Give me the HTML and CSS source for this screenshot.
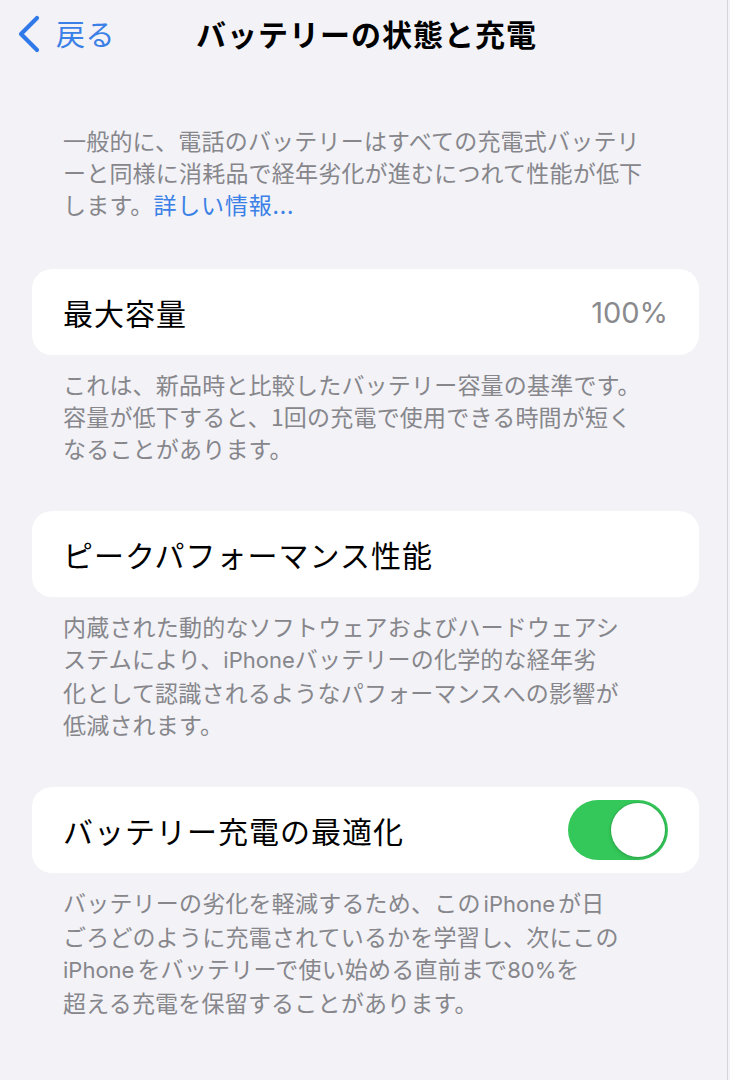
FILE: index.html
```html
<!DOCTYPE html>
<html lang="ja">
<head>
<meta charset="utf-8">
<title>バッテリーの状態と充電</title>
<link rel="stylesheet" href="styles.css">
</head>
<body>
<div class="screen">
  <header class="nav">
    <a class="back" href="#">
      <svg class="chev" width="26" height="38" viewBox="0 0 26 38" aria-hidden="true"><path d="M21 3 L5 19 L21 35" fill="none" stroke="#2f7ae8" stroke-width="4.2" stroke-linecap="round" stroke-linejoin="round"/></svg>
      <span class="back-label">戻る</span>
    </a>
    <h1 class="title">バッテリーの状態と充電</h1>
    <span class="nav-spacer"></span>
  </header>

  <main class="content">
    <p class="note intro">一般的に、電話のバッテリーはすべての充電式バッテリ<br>ーと同様に消耗品で経年劣化が進むにつれて性能が低下<br>します。<a class="link" href="#">詳しい情報...</a></p>

    <section class="card">
      <span class="label">最大容量</span>
      <span class="value">100%</span>
    </section>
    <p class="note">これは、新品時と比較したバッテリー容量の基準です。<br>容量が低下すると、1回の充電で使用できる時間が短く<br>なることがあります。</p>

    <section class="card">
      <span class="label">ピークパフォーマンス性能</span>
    </section>
    <p class="note">内蔵された動的なソフトウェアおよびハードウェアシ<br>ステムにより、<span class="latin">iPhone</span>バッテリーの化学的な経年劣<br>化として認識されるようなパフォーマンスへの影響が<br>低減されます。</p>

    <section class="card">
      <span class="label">バッテリー充電の最適化</span>
      <span class="toggle on"><span class="knob"></span></span>
    </section>
    <p class="note">バッテリーの劣化を軽減するため、この<span class="latin sp">iPhone</span>が日<br>ごろどのように充電されているかを学習し、次にこの<br><span class="latin spr">iPhone</span>をバッテリーで使い始める直前まで<span class="latin">80%</span>を<br>超える充電を保留することがあります。</p>
  </main>
</div>
</body>
</html>
```

FILE: styles.css
```css
html, body {
  margin: 0;
  padding: 0;
  background: #f2f2f7;
}

body {
  font-family: "Noto Sans CJK JP", "Noto Sans", sans-serif;
  color: #000;
}

.screen {
  width: 727px;
  min-height: 1080px;
  border-right: 1px solid #d6d6da;
  background: #f2f2f7;
}

.nav {
  height: 66px;
  display: grid;
  grid-template-columns: 1fr auto 1fr;
  align-items: center;
  padding: 0 0 0 16px;
}

.back {
  display: flex;
  align-items: center;
  gap: 14px;
  text-decoration: none;
  color: #3a80e6;
}

.chev {
  display: block;
  margin-top: 1px;
}

.back-label {
  font-size: 29px;
  line-height: 1;
  letter-spacing: 0.5px;
}

.title {
  margin: 0;
  font-size: 30px;
  font-weight: 700;
  letter-spacing: 1px;
  line-height: 1;
  margin-left: -10px;
}

.content {
  padding: 58px 28px 40px 32px;
  display: flex;
  flex-direction: column;
}

.note {
  margin: 0;
  padding: 0 0 0 31px;
  font-size: 23px;
  line-height: 32px;
  letter-spacing: 0.2px;
  color: #86868b;
  white-space: nowrap;
}

.intro {
  margin-bottom: 49px;
}

.card + .note {
  margin-top: 13px;
  margin-bottom: 47px;
}

.link {
  color: #3a80e6;
  text-decoration: none;
  letter-spacing: 0.8px;
}

.latin {
  font-family: "Inter", "Noto Sans CJK JP", sans-serif;
  font-size: 22px;
  letter-spacing: 0;
}

.sp {
  margin: 0 3px;
}

.spr {
  margin-right: 3px;
}

.card {
  height: 86px;
  background: #fff;
  border-radius: 20px;
  display: flex;
  align-items: center;
  justify-content: space-between;
  padding: 0 31px;
}

.label {
  font-size: 30px;
  line-height: 1;
  letter-spacing: 1px;
}

.value {
  font-family: "Inter", sans-serif;
  font-size: 29px;
  color: #8a8a8e;
  line-height: 1;
}

.toggle {
  width: 100px;
  height: 60px;
  border-radius: 30px;
  background: #34c759;
  position: relative;
  display: block;
}

.knob {
  position: absolute;
  top: 3px;
  right: 3px;
  width: 54px;
  height: 54px;
  border-radius: 50%;
  background: #fff;
  box-shadow: 0 0 0 1px rgba(40, 160, 70, 0.5), 0 2px 4px rgba(0, 0, 0, 0.12);
}
```
